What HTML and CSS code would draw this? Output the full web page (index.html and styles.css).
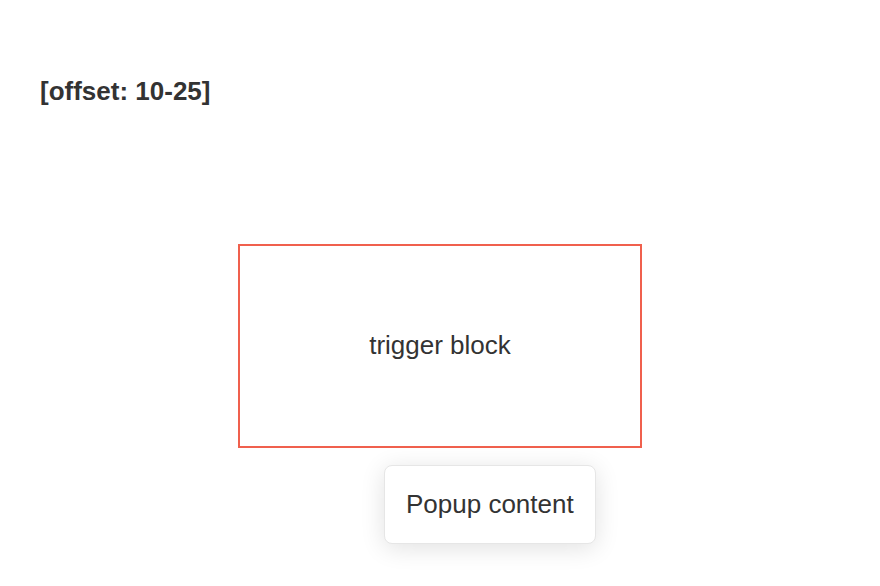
FILE: index.html
```html
<!DOCTYPE html>
<html>
<head>
<meta charset="utf-8">
<link rel="stylesheet" href="styles.css">
</head>
<body>
<div class="page">
  <h2 class="title">[offset: 10-25]</h2>
  <div class="stage">
    <div class="anchor">
      <div class="trigger">trigger block</div>
      <div class="popup">Popup content</div>
    </div>
  </div>
</div>
</body>
</html>
```
FILE: styles.css
```css
html, body {
  margin: 0;
  padding: 0;
  background: #fff;
}
.page {
  box-sizing: border-box;
  min-height: 586px;
  padding: 76px 40px 0 40px;
  font-family: "Liberation Sans", Arial, sans-serif;
  color: #333;
}
.title {
  margin: 0;
  font-size: 26px;
  font-weight: bold;
  line-height: 30px;
  color: #333;
}
.stage {
  display: flex;
  justify-content: center;
  padding-top: 138px;
}
.anchor {
  position: relative;
}
.trigger {
  box-sizing: border-box;
  width: 404px;
  height: 204px;
  border: 2px solid #f0604d;
  display: flex;
  align-items: center;
  justify-content: center;
  font-size: 26px;
  line-height: 30px;
  padding-bottom: 2px;
}
.popup {
  position: absolute;
  left: 146px;
  top: 221px;
  box-sizing: border-box;
  height: 79px;
  padding: 0 21px 1px 21px;
  display: flex;
  align-items: center;
  background: #fff;
  border: 1px solid #e6e6e6;
  border-radius: 8px;
  box-shadow: 0 4px 24px rgba(0, 0, 0, 0.12);
  font-size: 26px;
  white-space: nowrap;
  color: #333;
  z-index: 10;
}
```
